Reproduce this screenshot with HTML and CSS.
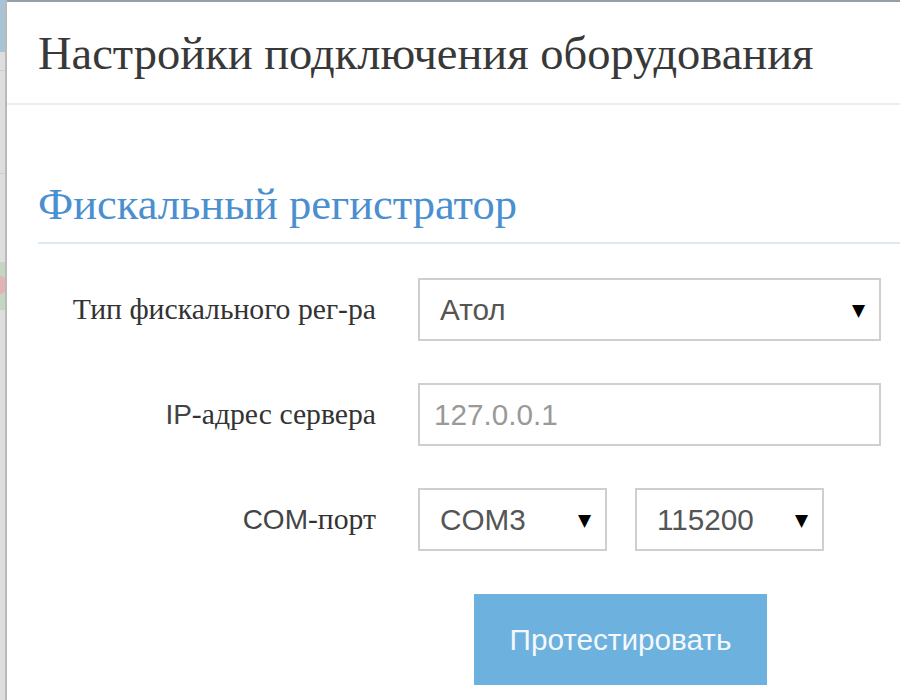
FILE: index.html
```html
<!DOCTYPE html>
<html lang="ru">
<head>
<meta charset="utf-8">
<title>Настройки подключения оборудования</title>
<link rel="stylesheet" href="styles.css">
</head>
<body>
<div class="page">
  <div class="backdrop">
    <div class="bd-top"></div>
    <div class="bd-line bd-l1"></div>
    <div class="bd-line bd-l2"></div>
    <div class="bd-green"><span class="bd-dot"></span></div>
  </div>
  <div class="modal">
    <div class="modal-header">
      <h4 class="modal-title">Настройки подключения оборудования</h4>
    </div>
    <div class="modal-body">
      <h3 class="section-title">Фискальный регистратор</h3>
      <div class="form">
        <label class="label">Тип фискального рег-ра</label>
        <div class="control select wide"><span class="val">Атол</span><span class="arrow">▼</span></div>

        <label class="label"><span class="lat">IP</span>-адрес сервера</label>
        <div class="control input wide"><span class="ph">127.0.0.1</span></div>

        <label class="label"><span class="lat">COM</span>-порт</label>
        <div class="pair">
          <div class="control select small"><span class="val">COM3</span><span class="arrow">▼</span></div>
          <div class="control select small"><span class="val">115200</span><span class="arrow">▼</span></div>
        </div>

        <div></div>
        <div class="btn-row"><button class="btn">Протестировать</button></div>
      </div>
    </div>
  </div>
</div>
</body>
</html>
```

FILE: styles.css
```css
html, body {
  margin: 0;
  padding: 0;
  background: #ffffff;
}
.page {
  display: flex;
  width: 900px;
  height: 700px;
  overflow: hidden;
}
.backdrop {
  width: 5px;
  flex: none;
  background: #dedede;
  border-right: 2px solid #b9b9b9;
  display: flex;
  flex-direction: column;
}
.bd-top {
  height: 52px;
  background: #a9c3d6;
}
.bd-line {
  height: 1px;
  background: #cfcfcf;
}
.bd-l1 { margin-top: 18px; }
.bd-l2 { margin-top: 102px; }
.bd-green {
  margin-top: 88px;
  height: 48px;
  background: #c4d6c2;
  position: relative;
  overflow: hidden;
}
.bd-dot {
  position: absolute;
  left: -10px;
  top: 14px;
  width: 18px;
  height: 18px;
  border-radius: 50%;
  background: #e3b2b2;
}
.modal {
  flex: 1;
  border-top: 2px solid #93a1ac;
  background: #fff;
  font-family: "Liberation Serif", "Times New Roman", serif;
  color: #333;
}
.modal-header {
  padding: 24px 0 0 31px;
  height: 77px;
  border-bottom: 2px solid #ececec;
}
.modal-title {
  margin: 0;
  font-weight: normal;
  font-size: 46.5px;
  line-height: 56px;
  color: #383838;
}
.modal-body {
  padding: 0 0 0 31px;
}
.section-title {
  margin: 73px 0 0;
  font-weight: normal;
  font-size: 44.5px;
  line-height: 52px;
  color: #4a8fcf;
  padding-bottom: 12px;
  border-bottom: 2px solid #dce8f3;
}
.form {
  display: grid;
  grid-template-columns: 338px 463px;
  column-gap: 42px;
  row-gap: 42px;
  margin-top: 34px;
}
.label {
  text-align: right;
  font-size: 29.7px;
  line-height: 63px;
  color: #333;
}
.lat {
  font-family: "Liberation Sans", Arial, sans-serif;
  font-size: 28px;
  color: #444;
}
.control {
  box-sizing: border-box;
  height: 63px;
  border: 2px solid #cfcfcf;
  background: #fff;
  font-family: "Liberation Sans", Arial, sans-serif;
  font-size: 29.7px;
  display: flex;
  align-items: center;
  justify-content: space-between;
  padding: 0 14px 0 20px;
  color: #555;
}
.input {
  padding-left: 14px;
}
.ph {
  color: #999;
}
.arrow {
  font-family: "DejaVu Sans", sans-serif;
  font-size: 17px;
  color: #000;
}
.pair {
  display: flex;
  gap: 28px;
}
.small {
  width: 189px;
}
.btn-row {
  padding-left: 56px;
  padding-top: 1px;
}
.btn {
  width: 293px;
  height: 91px;
  border: none;
  background: #6db1de;
  color: #f4f8fc;
  font-family: "Liberation Sans", Arial, sans-serif;
  font-size: 29.7px;
  padding: 0;
}
```
